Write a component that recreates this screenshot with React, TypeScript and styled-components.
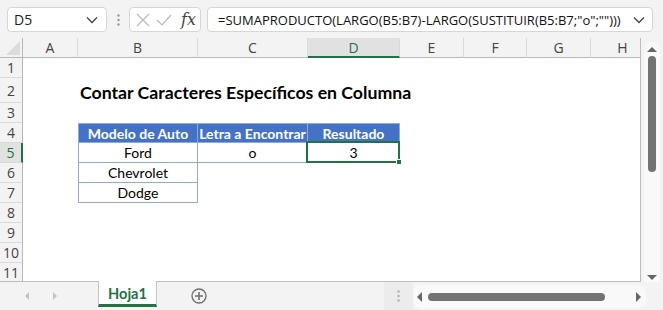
import { Fragment } from 'react'
import styled, { createGlobalStyle } from 'styled-components'

const GlobalStyle = createGlobalStyle`
    html, body {
        margin: 0;
        padding: 0;
        background: #f3f3f3;
        overflow: hidden;
    }
    * {
        box-sizing: border-box;
    }
`

const Window = styled.div`
    width: 663px;
    height: 310px;
    display: flex;
    flex-direction: column;
    background: #f3f3f3;
    font-family: "Open Sans", "Noto Sans", sans-serif;
    overflow: hidden;
`

// ---- formula bar ----
const TopBar = styled.div`
    height: 38px;
    flex: none;
    display: flex;
    align-items: flex-start;
    padding: 7px 10px 0 7px;
`
const Box = styled.div<{ $width: number }>`
    width: ${p => p.$width}px;
    height: 25px;
    background: #fff;
    border: 1px solid #d6d6d6;
    border-radius: 4px;
    display: flex;
    align-items: center;
`
const NameText = styled.span`
    flex: 1;
    padding-left: 6px;
    font-size: 14px;
    color: #222;
`
const Grip = styled.div`
    width: 22px;
    height: 25px;
    display: flex;
    align-items: center;
    justify-content: center;
`
const FxButtons = styled.div`
    flex: 1;
    display: flex;
    align-items: center;
    padding-left: 6px;
    gap: 6px;
`
const Fx = styled.span`
    margin-left: auto;
    padding-right: 4px;
    font-family: "DejaVu Serif", "Liberation Serif", serif;
    font-style: italic;
    font-size: 16px;
    color: #444;
`
const FormulaText = styled.span`
    flex: 1;
    padding-left: 10px;
    font-size: 13px;
    color: #111;
    white-space: nowrap;
    overflow: hidden;
`
const Gap = styled.div<{ $w: number }>`
    width: ${p => p.$w}px;
    flex: none;
`

// ---- sheet ----
const Body = styled.div`
    flex: none;
    height: 244px;
    display: flex;
`
const Sheet = styled.div`
    width: 641px;
    height: 244px;
    display: grid;
    grid-template-columns: 23px 55px 120px 110px 92px 64px 63px 64px 64px;
    grid-template-rows: 20px 20px 25px 20px 20px 20px 20px 20px 20px 20px 20px 20px;
    background: #fff;
    overflow: hidden;
    border-right: 1px solid #bdbdbd;
    border-bottom: 1px solid #bdbdbd;
`
const Corner = styled.div`
    background: #f3f3f3;
    border-right: 1px solid #b8b8b8;
    border-bottom: 1px solid #b8b8b8;
    position: relative;
    &::after {
        content: "";
        position: absolute;
        right: 2px;
        bottom: 2px;
        border-left: 14px solid transparent;
        border-bottom: 14px solid #dcdcdc;
    }
`
const ColHead = styled.div<{ $active?: boolean }>`
    background: ${p => (p.$active ? '#e1e1e1' : '#f3f3f3')};
    border-right: 1px solid #dadada;
    border-bottom: ${p => (p.$active ? '2px solid #217346' : '1px solid #b8b8b8')};
    color: ${p => (p.$active ? '#217346' : '#444')};
    font-size: 14px;
    display: flex;
    align-items: center;
    justify-content: center;
`
const RowHead = styled.div<{ $active?: boolean }>`
    background: ${p => (p.$active ? '#e1e1e1' : '#f3f3f3')};
    border-bottom: 1px solid #dadada;
    border-right: ${p => (p.$active ? '2px solid #217346' : '1px solid #b8b8b8')};
    color: ${p => (p.$active ? '#217346' : '#444')};
    font-size: 14px;
    display: flex;
    align-items: center;
    justify-content: center;
`
const Cell = styled.div<{ $kind: 'plain' | 'title' | 'head' | 'data'; $left?: boolean; $top?: boolean }>`
    position: relative;
    font-family: Lato, "Liberation Sans", sans-serif;
    white-space: nowrap;
    display: flex;
    align-items: center;
    justify-content: ${p => (p.$kind === 'title' ? 'flex-start' : 'center')};
    padding-left: ${p => (p.$kind === 'title' ? '2px' : '0')};
    padding-top: ${p => (p.$kind === 'title' ? '3px' : '0')};
    font-size: ${p => (p.$kind === 'title' ? '17.7px' : '14px')};
    font-weight: ${p => (p.$kind === 'title' || p.$kind === 'head' ? 700 : 400)};
    color: ${p => (p.$kind === 'head' ? '#fff' : '#000')};
    background: ${p => (p.$kind === 'head' ? '#4472c4' : 'transparent')};
    z-index: ${p => (p.$kind === 'title' ? 2 : 'auto')};
    ${p =>
        p.$kind === 'head' || p.$kind === 'data'
            ? `
        border-right: 1px solid #8ea9db;
        border-bottom: 1px solid #8ea9db;
        ${p.$left ? 'border-left: 1px solid #8ea9db;' : ''}
        ${p.$top ? 'border-top: 1px solid #8ea9db;' : ''}
    `
            : ''}
`
const Selection = styled.div`
    position: absolute;
    left: -2px;
    top: -2px;
    right: -1px;
    bottom: -1px;
    border: 2px solid #217346;
    pointer-events: none;
    z-index: 3;
`
const Handle = styled.div`
    position: absolute;
    right: -4px;
    bottom: -4px;
    width: 6px;
    height: 6px;
    background: #217346;
    border: 1px solid #fff;
`

// ---- vertical scrollbar ----
const VScroll = styled.div`
    width: 22px;
    height: 244px;
    display: flex;
    flex-direction: column;
    align-items: center;
    padding: 4px 0 0;
`
const VTrack = styled.div`
    width: 16px;
    flex: 1;
    background: #f9f9f9;
    border-radius: 8px 8px 0 0;
    display: flex;
    flex-direction: column;
    align-items: center;
    padding-top: 5px;
`
const VThumb = styled.div`
    width: 8px;
    height: 116px;
    margin-top: 4px;
    border-radius: 4px;
    background: #737373;
`
const Arrow = styled.div<{ $dir: 'up' | 'down' | 'left' | 'right'; $color?: string; $size?: number }>`
    width: 0;
    height: 0;
    flex: none;
    ${p => {
        const s = p.$size ?? 5
        const c = p.$color ?? '#666'
        if (p.$dir === 'up') return `border-left:${s}px solid transparent;border-right:${s}px solid transparent;border-bottom:${s}px solid ${c};`
        if (p.$dir === 'down') return `border-left:${s}px solid transparent;border-right:${s}px solid transparent;border-top:${s}px solid ${c};`
        if (p.$dir === 'left') return `border-top:${s}px solid transparent;border-bottom:${s}px solid transparent;border-right:${s}px solid ${c};`
        return `border-top:${s}px solid transparent;border-bottom:${s}px solid transparent;border-left:${s}px solid ${c};`
    }}
`
const VBottom = styled.div`
    margin-top: auto;
    margin-bottom: 2px;
`

// ---- sheet tabs ----
const TabBar = styled.div`
    flex: 1;
    display: flex;
    align-items: stretch;
`
const NavArrows = styled.div`
    width: 98px;
    display: flex;
    align-items: center;
    padding-left: 25px;
    gap: 24px;
`
const Tab = styled.div`
    width: 59px;
    background: #fff;
    border-left: 1px solid #c6c6c6;
    border-right: 1px solid #c6c6c6;
    border-bottom: 3px solid #217346;
    margin-top: -1px;
    margin-bottom: 3px;
    color: #217346;
    font-family: Lato, "Liberation Sans", sans-serif;
    font-weight: 700;
    font-size: 14.6px;
    display: flex;
    align-items: center;
    justify-content: center;
    padding-top: 1px;
`
const AddSheet = styled.div`
    width: 84px;
    display: flex;
    align-items: center;
    justify-content: center;
`
const Spacer = styled.div`
    width: 143px;
`
const SplitGrip = styled.div`
    width: 29px;
    background: #ececec;
    display: flex;
    align-items: center;
    justify-content: center;
`
const HTrack = styled.div`
    width: 233px;
    margin: 3px 0 2px;
    background: #f9f9f9;
    border-radius: 8px;
    display: flex;
    align-items: center;
    padding: 0 5px 0 4px;
`
const HThumb = styled.div`
    width: 177px;
    height: 8px;
    margin: 0 auto 0 6px;
    border-radius: 4px;
    background: #737373;
`

const columns = ['A', 'B', 'C', 'D', 'E', 'F', 'G', 'H']
const rows = [1, 2, 3, 4, 5, 6, 7, 8, 9, 10, 11]

type CellDef = { text: string; kind: 'title' | 'head' | 'data'; left?: boolean; top?: boolean; selected?: boolean }

const cells: Record<string, CellDef> = {
    B2: { text: 'Contar Caracteres Específicos en Columna', kind: 'title' },
    B4: { text: 'Modelo de Auto', kind: 'head', left: true, top: true },
    C4: { text: 'Letra a Encontrar', kind: 'head', top: true },
    D4: { text: 'Resultado', kind: 'head', top: true },
    B5: { text: 'Ford', kind: 'data', left: true },
    C5: { text: 'o', kind: 'data' },
    D5: { text: '3', kind: 'data', selected: true },
    B6: { text: 'Chevrolet', kind: 'data', left: true },
    B7: { text: 'Dodge', kind: 'data', left: true },
}

const Dots = ({ color = '#9a9a9a' }: { color?: string }) => (
    <svg width="3" height="12" viewBox="0 0 3 12">
        <circle cx="1.5" cy="1.5" r="1.2" fill={color} />
        <circle cx="1.5" cy="6" r="1.2" fill={color} />
        <circle cx="1.5" cy="10.5" r="1.2" fill={color} />
    </svg>
)

const App = () => {
    return (
        <>
            <GlobalStyle />
            <Window>
                <TopBar>
                    <Box $width={100}>
                        <NameText>D5</NameText>
                        <svg width="12" height="8" viewBox="0 0 12 8" style={{ marginRight: 8 }}>
                            <path d="M1 1.5 L6 6.5 L11 1.5" fill="none" stroke="#444" strokeWidth="1.3" />
                        </svg>
                    </Box>
                    <Grip>
                        <Dots />
                    </Grip>
                    <Box $width={72}>
                        <FxButtons>
                            <svg width="14" height="14" viewBox="0 0 14 14">
                                <path d="M1 1 L13 13 M13 1 L1 13" stroke="#b8b8b8" strokeWidth="1.2" />
                            </svg>
                            <svg width="16" height="14" viewBox="0 0 16 14">
                                <path d="M1 7 L6 12 L15 2" fill="none" stroke="#b8b8b8" strokeWidth="1.2" />
                            </svg>
                            <Fx>fx</Fx>
                        </FxButtons>
                    </Box>
                    <Gap $w={6} />
                    <Box $width={446}>
                        <FormulaText>=SUMAPRODUCTO(LARGO(B5:B7)-LARGO(SUSTITUIR(B5:B7;"o";"")))</FormulaText>
                        <svg width="12" height="8" viewBox="0 0 12 8" style={{ marginRight: 7 }}>
                            <path d="M1 1.5 L6 6.5 L11 1.5" fill="none" stroke="#444" strokeWidth="1.3" />
                        </svg>
                    </Box>
                </TopBar>

                <Body>
                    <Sheet>
                        <Corner />
                        {columns.map(c => (
                            <ColHead key={c} $active={c === 'D'}>{c}</ColHead>
                        ))}
                        {rows.map(r => (
                            <Fragment key={r}>
                                <RowHead $active={r === 5}>{r}</RowHead>
                                {columns.map(c => {
                                    const def = cells[`${c}${r}`]
                                    if (!def) return <Cell key={c} $kind="plain" />
                                    return (
                                        <Cell key={c} $kind={def.kind} $left={def.left} $top={def.top}>
                                            {def.text}
                                            {def.selected && (
                                                <Selection>
                                                    <Handle />
                                                </Selection>
                                            )}
                                        </Cell>
                                    )
                                })}
                            </Fragment>
                        ))}
                    </Sheet>
                    <VScroll>
                        <VTrack>
                            <Arrow $dir="up" $size={5} />
                            <VThumb />
                            <VBottom>
                                <Arrow $dir="down" $size={5} />
                            </VBottom>
                        </VTrack>
                    </VScroll>
                </Body>

                <TabBar>
                    <NavArrows>
                        <Arrow $dir="left" $size={4} $color="#c4c4c4" />
                        <Arrow $dir="right" $size={4} $color="#c4c4c4" />
                    </NavArrows>
                    <Tab>Hoja1</Tab>
                    <AddSheet>
                        <svg width="16" height="16" viewBox="0 0 16 16">
                            <circle cx="8" cy="8" r="7" fill="none" stroke="#6e6e6e" strokeWidth="1.3" />
                            <path d="M8 4 V12 M4 8 H12" stroke="#6e6e6e" strokeWidth="1.5" />
                        </svg>
                    </AddSheet>
                    <Spacer />
                    <SplitGrip>
                        <Dots color="#b0b0b0" />
                    </SplitGrip>
                    <HTrack>
                        <Arrow $dir="left" $size={5} />
                        <HThumb />
                        <Arrow $dir="right" $size={5} />
                    </HTrack>
                </TabBar>
            </Window>
        </>
    )
}

export default App
